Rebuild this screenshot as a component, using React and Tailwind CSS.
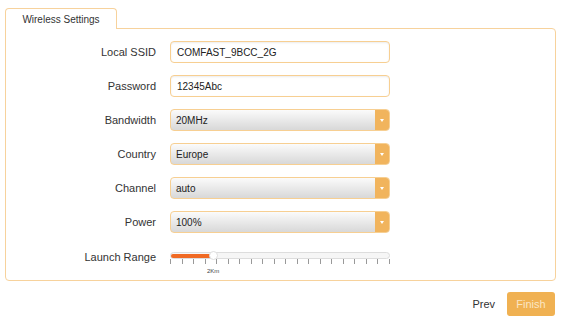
import React from 'react'

const font = { fontFamily: '"Liberation Sans", Arial, sans-serif' }

function Label({ children }) {
  return <div className="w-[150px] text-right text-[11px] text-[#333]">{children}</div>
}

function TextInput({ value }) {
  return (
    <div className="ml-[14px] flex h-[22px] w-[220px] items-center rounded-[4px] border border-[#f7cf92] bg-white px-[6px] text-[10px] text-[#222] shadow-[inset_0_1px_2px_rgba(0,0,0,0.08)]">
      {value}
    </div>
  )
}

function Select({ value }) {
  return (
    <div className="ml-[14px] flex h-[22px] w-[220px] overflow-hidden rounded-[4px] border border-[#f7cf92] bg-gradient-to-b from-[#fbfbfb] to-[#d8d8d8]">
      <div className="flex flex-1 items-center px-[5px] text-[10px] text-[#222]">{value}</div>
      <div className="flex w-[14px] items-center justify-center bg-[#f1b45d]">
        <div className="h-0 w-0 border-x-[2.5px] border-t-[3px] border-x-transparent border-t-white" />
      </div>
    </div>
  )
}

function Row({ label, children }) {
  return (
    <div className="flex h-[34px] items-center">
      <Label>{label}</Label>
      {children}
    </div>
  )
}

function Range() {
  const ticks = Array.from({ length: 20 })
  return (
    <div className="relative ml-[14px] h-[30px] w-[220px]">
      <div className="absolute left-0 top-[0px] h-[7px] w-[220px] rounded-[4px] border border-[#ddd] bg-[#f6f6f6]" />
      <div className="absolute left-[1px] top-[2px] h-[4px] w-[42px] rounded-l-[2px] bg-[#f06a24]" />
      <div className="absolute left-[39px] top-[-1px] h-[9px] w-[9px] rounded-full border border-[#ddd] bg-white" />
      <div className="absolute left-0 top-[7px] flex w-[220px] justify-between">
        {ticks.map((_, i) => (
          <div key={i} className="h-[5px] w-px bg-[#999]" />
        ))}
      </div>
      <div className="absolute left-[37px] top-[15px] text-[6px] text-[#444]">2Km</div>
    </div>
  )
}

export default function App() {
  return (
    <div className="h-[334px] w-[567px] bg-white" style={font}>
      <div className="px-[5px] pt-[8px]">
        <div className="relative z-10 flex h-[21px] w-[112px] items-center justify-center rounded-t-[4px] border border-b-0 border-[#f7d29c] bg-white text-[10px] text-[#333]">
          Wireless Settings
        </div>
        <div className="mt-[-1px] h-[253px] w-[551px] rounded-[4px] rounded-tl-none border border-[#f7d29c] bg-white pt-[6px]">
          <Row label="Local SSID"><TextInput value="COMFAST_9BCC_2G" /></Row>
          <Row label="Password"><TextInput value="12345Abc" /></Row>
          <Row label="Bandwidth"><Select value="20MHz" /></Row>
          <Row label="Country"><Select value="Europe" /></Row>
          <Row label="Channel"><Select value="auto" /></Row>
          <Row label="Power"><Select value="100%" /></Row>
          <div className="mt-[13px] flex items-start">
            <div className="mt-[-3px]"><Label>Launch Range</Label></div>
            <Range />
          </div>
        </div>
      </div>
      <div className="mt-[11px] flex items-center justify-end pr-[12px]">
        <span className="mr-[12px] text-[11px] text-[#333]">Prev</span>
        <div className="flex h-[24px] w-[48px] items-center justify-center rounded-[3px] bg-[#f0b152] text-[11px] text-[#fbe6c4]">
          Finish
        </div>
      </div>
    </div>
  )
}
